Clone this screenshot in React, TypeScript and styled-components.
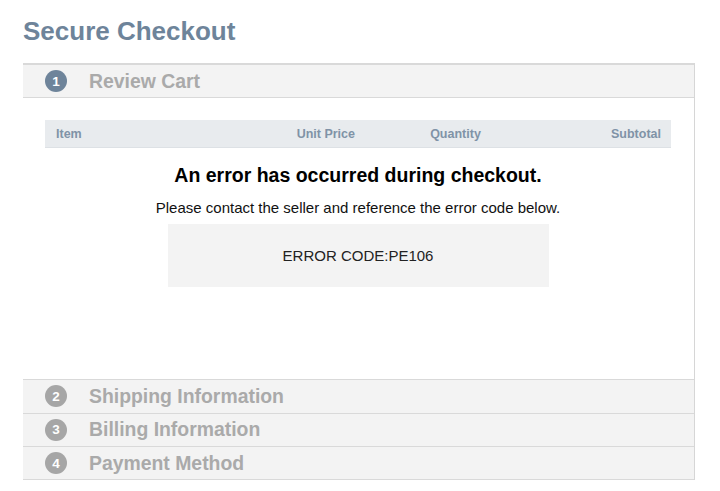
import React from "react";
import styled, { createGlobalStyle } from "styled-components";

const GlobalStyle = createGlobalStyle`
  body {
    margin: 0;
    background: #fff;
    font-family: "Liberation Sans", Arial, sans-serif;
  }
`;

const Page = styled.div`
  padding: 16px 25px 0 23px;
`;

const Title = styled.h1`
  margin: 0 0 17px;
  font-size: 26px;
  line-height: 30px;
  font-weight: bold;
  color: #6e849a;
`;

const Accordion = styled.section`
  border-top: 2px solid #d9d9d9;
  border-right: 1px solid #d6d6d6;
`;

const StepHeader = styled.div`
  display: flex;
  align-items: center;
  gap: 22px;
  height: 32.33px;
  padding-left: 22px;
  background: #f3f3f3;
  border-bottom: 1px solid #d9d9d9;
`;

const StepNumber = styled.span<{ $active?: boolean }>`
  display: flex;
  align-items: center;
  justify-content: center;
  width: 22px;
  height: 22px;
  border-radius: 50%;
  background: ${(p) => (p.$active ? "#6e849a" : "#a6a6a6")};
  color: #fff;
  font-size: 13.5px;
  font-weight: bold;
`;

const StepTitle = styled.span`
  font-size: 19.4px;
  font-weight: bold;
  color: #aaaaaa;
`;

const StepBody = styled.div`
  display: flex;
  flex-direction: column;
  align-items: center;
  padding: 22px 23px 92px 22px;
  border-bottom: 1px solid #d9d9d9;
  background: #fff;
`;

const CartHead = styled.div`
  display: grid;
  grid-template-columns: 200px 120px 180px 1fr;
  align-items: center;
  align-self: stretch;
  height: 27px;
  background: #e8ebee;
  border-bottom: 1px solid #dde1e5;
`;

const HeadCell = styled.span<{ $align: "left" | "right" | "center" }>`
  padding: 0 10px 0 11px;
  text-align: ${(p) => p.$align};
  font-size: 12.5px;
  font-weight: bold;
  color: #8093a7;
`;

const ErrorTitle = styled.h2`
  margin: 16px 0 0;
  font-size: 19.5px;
  line-height: 22px;
  font-weight: bold;
  color: #000;
`;

const ErrorText = styled.p`
  margin: 13px 0 0;
  font-size: 15px;
  line-height: 17px;
  color: #111;
`;

const CodeBox = styled.div`
  display: flex;
  align-items: center;
  justify-content: center;
  width: 381px;
  height: 63px;
  margin-top: 8px;
  background: #f3f3f3;
  font-size: 15px;
  color: #222;
`;

const steps = [
  "Review Cart",
  "Shipping Information",
  "Billing Information",
  "Payment Method",
];

const Step = ({ n, label, active }: { n: number; label: string; active?: boolean }) => (
  <StepHeader>
    <StepNumber $active={active}>{n}</StepNumber>
    <StepTitle>{label}</StepTitle>
  </StepHeader>
);

export default function App() {
  return (
    <Page>
      <GlobalStyle />
      <Title>Secure Checkout</Title>
      <Accordion>
        <Step n={1} label={steps[0]} active />
        <StepBody>
          <CartHead>
            <HeadCell $align="left">Item</HeadCell>
            <HeadCell $align="right">Unit Price</HeadCell>
            <HeadCell $align="center">Quantity</HeadCell>
            <HeadCell $align="right">Subtotal</HeadCell>
          </CartHead>
          <ErrorTitle>An error has occurred during checkout.</ErrorTitle>
          <ErrorText>
            Please contact the seller and reference the error code below.
          </ErrorText>
          <CodeBox>ERROR CODE:PE106</CodeBox>
        </StepBody>
        {steps.slice(1).map((label, i) => (
          <Step key={label} n={i + 2} label={label} />
        ))}
      </Accordion>
    </Page>
  );
}
